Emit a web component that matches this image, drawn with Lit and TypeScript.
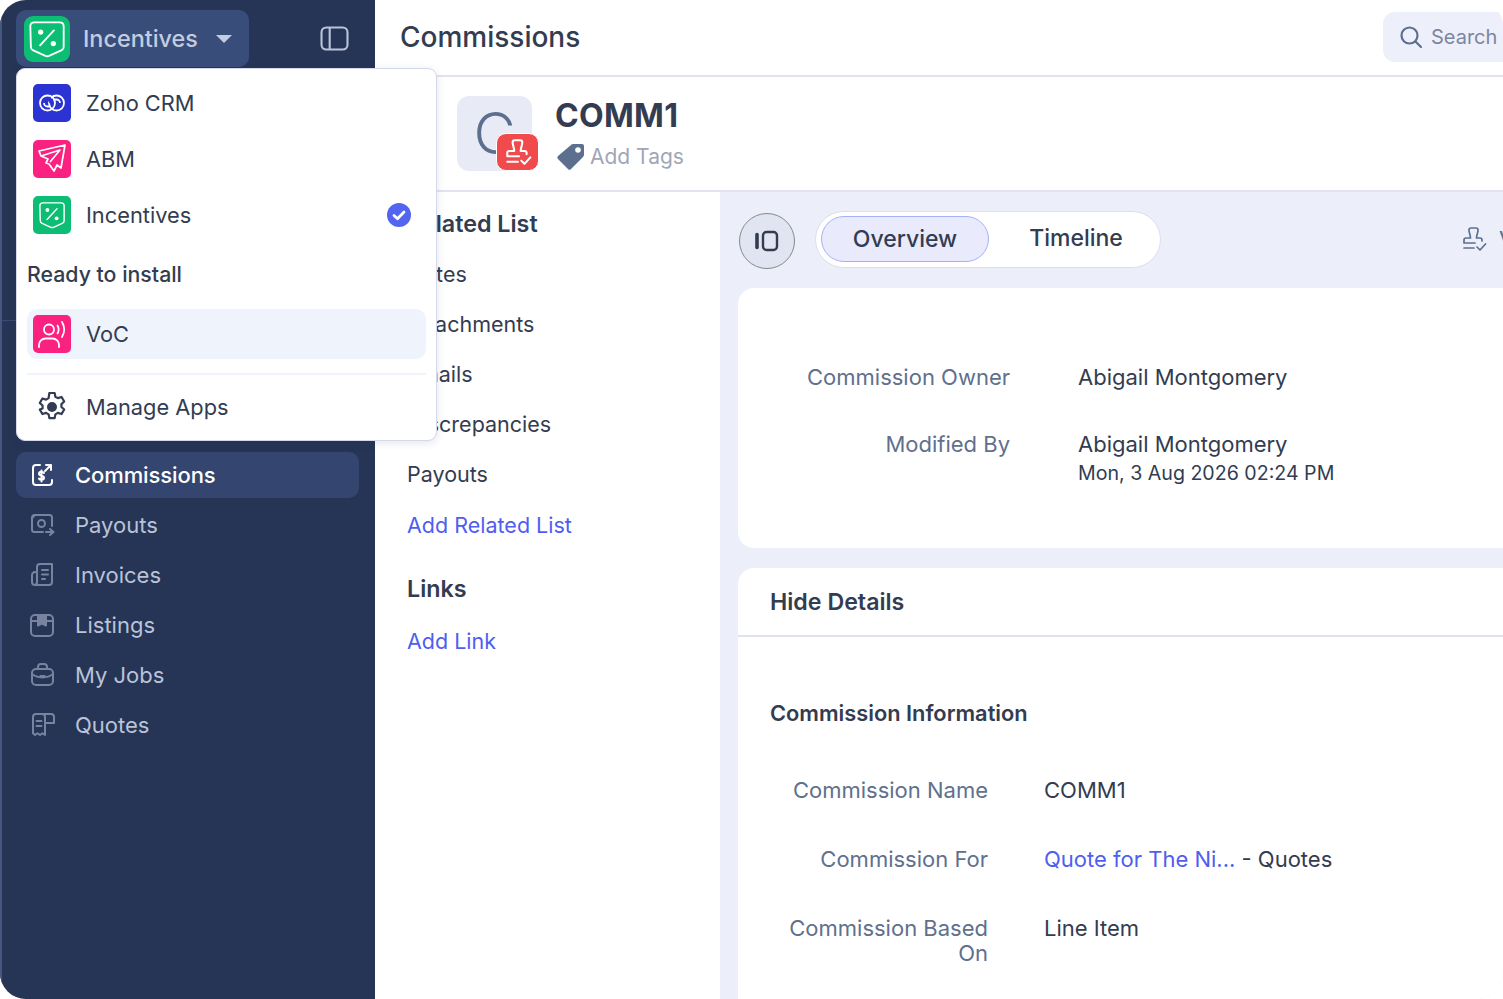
import { LitElement, html, css, svg } from 'lit';
import { customElement } from 'lit/decorators.js';

const shield = (w: number, s = 1) => svg`
  <g transform="translate(20 20) scale(${s}) translate(-20 -20)">
    <path d="M5.500 9c0-2.200 1.500-3.500 3.500-3.500h22c2 0 3.500 1.300 3.500 3.500v18c0 1.200-.6 2.200-1.700 2.700l-11 5c-1 .4-2.200.4-3.200 0l-11-5c-1.100-.5-1.600-1.500-1.600-2.700z" fill="none" stroke="#fff" stroke-width="${w}"/>
    <path d="M14 25.500 26 12.500" stroke="#fff" stroke-width="${w}" stroke-linecap="round"/>
    <circle cx="14.500" cy="14" r="2.300" fill="#fff"/><circle cx="25.500" cy="24" r="2.300" fill="#fff"/>
  </g>`;

const navIcons: Record<string, unknown> = {
  Commissions: svg`<path d="M11 3H7a3 3 0 0 0-3 3v14a3 3 0 0 0 3 3h13a3 3 0 0 0 3-3v-2"/><path d="M16 9l6-6M17 3h5v5"/><path d="M15 11c-.5-.8-1.300-1.200-2.500-1.200-1.500 0-2.500.8-2.500 2 0 2.600 5 1.400 5 4 0 1.200-1 2-2.500 2-1.200 0-2-.4-2.500-1.200M12.500 8.500v11"/>`,
  Payouts: svg`<path d="M3 5.500A2.500 2.500 0 0 1 5.500 3h15A2.500 2.500 0 0 1 23 5.500V14M14 20H5.500A2.500 2.500 0 0 1 3 17.500V5.500"/><circle cx="12.500" cy="11.500" r="3.500"/><path d="M3 6l3-3M17 20h7M21 17l3.500 3-3.500 3"/>`,
  Invoices: svg`<path d="M8 10V5a3 3 0 0 1 3-3h12v18a3 3 0 0 1-3 3H6a3 3 0 0 1-3-3v-7a3 3 0 0 1 5-2.200V20a3 3 0 0 1-2 3"/><path d="M13 8h6M13 12.500h6M13 17h3"/>`,
  Listings: svg`<rect x="2" y="3" width="22" height="21" rx="4"/><path d="M2 9h22"/><path d="M9 4h8v9.500l-4-1.800-4 1.800z" fill="currentColor"/>`,
  'My Jobs': svg`<rect x="3" y="7" width="21" height="16" rx="4"/><path d="M9 7V5a3 3 0 0 1 3-3h3a3 3 0 0 1 3 3v2M3 12c6 4.500 15 4.500 21 0M11.500 14h4"/>`,
  Quotes: svg`<path d="M16 9V5a3 3 0 0 0-3-3h9a3 3 0 0 1 3 3v6h-9M16 9v14l-2.500-1.800L11 23l-2.500-1.800L6 23l-2-1.800V5a3 3 0 0 1 3-3h6"/><path d="M7.500 9h5M7.500 14h5"/>`,
};

const stamp = svg`<path d="M21 15v-1a2 2 0 0 0-2-2h-3.500c0-3 1.500-5 1.500-8a2 2 0 0 0-2-2h-5a2 2 0 0 0-2 2c0 3 1.500 5 1.500 8H5a2 2 0 0 0-2 2v3h11M3 22h10M16 21l3 3 5.500-6"/>`;

@customElement('app-root')
export class AppRoot extends LitElement {
  static styles = css`
    :host {
      display: block;
      width: 1503px;
      height: 999px;
      font-family: Inter, 'Noto Sans', sans-serif;
      color: #333c50;
    }
    svg { display: block; flex: none; }
    .shell {
      position: relative;
      display: flex;
      width: 1503px;
      height: 999px;
      overflow: hidden;
      border-radius: 26px;
      background: #fff;
    }

    .side {
      flex: none;
      width: 375px;
      box-sizing: border-box;
      background: #263556;
      border-left: 2px solid #46577f;
      padding: 10px 16px 0 14px;
    }
    .side-top {
      display: flex;
      align-items: center;
      justify-content: space-between;
      height: 57px;
      padding-right: 10px;
    }
    .switcher {
      display: flex;
      align-items: center;
      width: 233px;
      height: 57px;
      box-sizing: border-box;
      padding-left: 8px;
      background: #394d7a;
      border-radius: 10px;
      color: #c3cce0;
      font-size: 23.400px;
      font-weight: 500;
    }
    .logo-big {
      width: 46px;
      height: 46px;
      background: #0cbd74;
      border-radius: 9px;
      margin-right: 13px;
    }
    .caret {
      width: 0;
      height: 0;
      margin-left: 18px;
      border-left: 8px solid transparent;
      border-right: 8px solid transparent;
      border-top: 8px solid #c3cce0;
    }
    .side-line { height: 1px; margin: 253px 0 0 -14px; background: #3a4a70; }
    .nav { display: flex; flex-direction: column; margin-top: 131px; }
    .nav-item {
      display: flex;
      align-items: center;
      height: 46px;
      margin-bottom: 4px;
      padding-left: 13px;
      gap: 20px;
      color: #b9c3d9;
      font-size: 22px;
      border-radius: 10px;
    }
    .nav-item svg { stroke: #77839f; color: #77839f; }
    .nav-item.on {
      background: #34466f;
      color: #fff;
      font-weight: 500;
      letter-spacing: -0.100px;
    }
    .nav-item.on svg { stroke: #fff; color: #fff; }

    .menu {
      position: absolute;
      left: 16px;
      top: 68px;
      width: 421px;
      height: 373px;
      box-sizing: border-box;
      z-index: 5;
      padding: 9px 10px 0 10px;
      background: #fff;
      border: 1px solid #d4d8ea;
      border-radius: 9px;
      box-shadow: 0 2px 8px rgba(30, 40, 80, 0.12);
    }
    .app {
      display: flex;
      align-items: center;
      height: 50px;
      margin-bottom: 6px;
      padding-left: 6px;
      font-size: 21.800px;
      border-radius: 10px;
    }
    .app .tile {
      width: 38px;
      height: 38px;
      border-radius: 5px;
      margin-right: 15px;
      flex: none;
    }
    .app.hover { background: #eff3fc; margin-bottom: 0; }
    .green { background: #0cbd74; }
    .blue { background: #2b33d3; }
    .pink { background: #fb2180; }
    .check { margin-left: auto; margin-right: 15px; }
    .menu-head {
      font-size: 21.300px;
      font-weight: 500;
      margin: 21px 0 20.500px 0;
      line-height: 27px;
    }
    .menu-sep { height: 2px; background: #eff3fc; margin: 14px 0 7px; }
    .manage { margin-bottom: 0; }

    .main { flex: 1; min-width: 0; display: flex; flex-direction: column; }
    .head {
      flex: none;
      display: flex;
      align-items: center;
      justify-content: space-between;
      height: 77px;
      box-sizing: border-box;
      padding: 0 0 2px 25px;
      border-bottom: 2px solid #e2e3f2;
    }
    .head h1 { margin: 0; font-size: 28px; font-weight: 500; }
    .search {
      display: flex;
      align-items: center;
      gap: 8px;
      width: 180px;
      height: 50px;
      margin-right: -60px;
      padding-left: 16px;
      box-sizing: border-box;
      background: #edf0fa;
      border-radius: 12px;
      color: #7b869f;
      font-size: 20px;
      white-space: nowrap;
    }

    .rec {
      flex: none;
      display: flex;
      align-items: center;
      height: 115px;
      box-sizing: border-box;
      padding-left: 82px;
      border-bottom: 2px solid #e2e3f2;
    }
    .avatar {
      position: relative;
      width: 75px;
      height: 75px;
      margin: -1px 23px 0 0;
      background: #e8ebf5;
      border-radius: 12px;
      color: #5d6f8f;
      font-size: 58px;
      font-weight: 300;
      line-height: 75px;
      text-align: center;
    }
    .badge {
      position: absolute;
      left: 39px;
      top: 37px;
      width: 43px;
      height: 38px;
      box-sizing: border-box;
      background: #f04a4d;
      border: 1px solid #fff;
      border-radius: 10px;
      display: flex;
      align-items: center;
      justify-content: center;
    }
    .rec-text { margin-top: 2px; }
    .rec h2 { margin: 0; font-size: 32px; font-weight: 700; line-height: 36px; letter-spacing: 0.300px; }
    .tags {
      display: flex;
      align-items: center;
      gap: 4px;
      margin-top: 7px;
      margin-left: 1px;
      font-size: 21px;
      color: #a0a6b5;
    }

    .body { flex: 1; min-height: 0; display: flex; }
    .related {
      flex: none;
      width: 345px;
      box-sizing: border-box;
      padding: 18px 0 0 32px;
      font-size: 21.500px;
    }
    .related h3 { margin: 0; font-size: 23.300px; font-weight: 600; line-height: 28px; }
    .related div { height: 50px; line-height: 50px; }
    .related .first { margin-top: 11px; }
    .related .link { color: #4f5ef0; height: 52px; line-height: 52px; }
    .related h3.links { margin-top: 24px; }
    .related .addlink { margin-top: 12px; }

    .panel {
      flex: 1;
      min-width: 0;
      box-sizing: border-box;
      background: #eceffa;
      padding: 18px 0 0 18px;
      overflow: hidden;
    }
    .tools { display: flex; align-items: center; height: 58px; margin-bottom: 20px; }
    .round {
      flex: none;
      width: 56px;
      height: 56px;
      box-sizing: border-box;
      border-radius: 50%;
      background: #e1e5f1;
      border: 1px solid #85888f;
      display: flex;
      align-items: center;
      justify-content: center;
      margin: 4px 20px 0 1px;
    }
    .tabs {
      display: flex;
      flex: none;
      align-items: center;
      width: 346px;
      height: 57px;
      box-sizing: border-box;
      padding: 0 5px;
      background: #fff;
      border: 1px solid #dcdeee;
      border-radius: 29px;
      font-size: 23px;
      font-weight: 500;
    }
    .tab { flex: none; width: 170px; text-align: center; line-height: 44px; height: 46px; box-sizing: border-box; }
    .tab.on {
      width: 168px;
      background: #e9ebfd;
      border: 1px solid #a5b1f7;
      border-radius: 23px;
      margin-right: 2px;
    }
    .stamp {
      flex: none;
      display: flex;
      align-items: center;
      gap: 12px;
      margin-left: 300px;
      font-size: 22px;
      color: #5d6f8f;
      white-space: nowrap;
    }

    .card {
      background: #fff;
      border-radius: 16px 0 0 16px;
      width: 800px;
      font-size: 22px;
    }
    .card.one { height: 260px; margin-bottom: 20px; padding-top: 72px; box-sizing: border-box; }
    .card.two { border-radius: 16px 0 0 0; height: 440px; }
    .row { display: grid; align-items: start; }
    .one .row { grid-template-columns: 272px 1fr; column-gap: 68px; margin-bottom: 33px; line-height: 34px; }
    .two .row { grid-template-columns: 250px 1fr; column-gap: 56px; margin-bottom: 44px; line-height: 25px; }
    .two .lab { padding-left: 50px; }
    .lab { color: #60708d; text-align: right; }
    .val small { display: block; font-size: 19.600px; line-height: 25px; }
    .val a { color: #4f5ef0; }
    .hide {
      height: 69px;
      box-sizing: border-box;
      padding-left: 32px;
      line-height: 68px;
      font-size: 23.200px;
      font-weight: 600;
      border-bottom: 2px solid #dfe1ef;
    }
    .info {
      padding: 62px 0 0 32px;
      height: 28px;
      line-height: 28px;
      margin-bottom: 51px;
      font-size: 21.800px;
      font-weight: 600;
    }
  `;

  navRow(name: string, active = false) {
    return html`<div class="nav-item ${active ? 'on' : ''}">
      <svg width="26" height="26" viewBox="0 0 26 26" fill="none" stroke-width="2" stroke-linecap="round" stroke-linejoin="round">${navIcons[name]}</svg>
      ${name}
    </div>`;
  }

  render() {
    return html`
      <div class="shell">
        <aside class="side">
          <div class="side-top">
            <div class="switcher">
              <svg class="logo-big" viewBox="0 0 40 40">${shield(1.600)}</svg>
              Incentives
              <span class="caret"></span>
            </div>
            <svg width="29" height="25" viewBox="0 0 30 26" fill="none" stroke="#b9c3d9" stroke-width="2.200">
              <rect x="1.500" y="1.500" width="27" height="23" rx="5"/><path d="M10 1.500v23"/>
            </svg>
          </div>
          <div class="side-line"></div>
          <nav class="nav">
            ${this.navRow('Commissions', true)}
            ${this.navRow('Payouts')}
            ${this.navRow('Invoices')}
            ${this.navRow('Listings')}
            ${this.navRow('My Jobs')}
            ${this.navRow('Quotes')}
          </nav>
        </aside>

        <div class="menu">
          <div class="app">
            <svg class="tile blue" viewBox="0 0 38 38" fill="none" stroke="#fff" stroke-width="1.800">
              <circle cx="14.500" cy="19" r="7.500"/>
              <circle cx="23.500" cy="19" r="7.500"/>
              <path d="M15.500 13.500l3 5" stroke="#2b33d3" stroke-width="4"/>
              <path d="M11 19a3.500 3.500 0 0 0 3.500 3.500h3M27 19a3.500 3.500 0 0 0-3.500-3.500h-3"/>
            </svg>
            Zoho CRM
          </div>
          <div class="app">
            <svg class="tile pink" viewBox="0 0 38 38" fill="none" stroke="#fff" stroke-width="1.700" stroke-linejoin="round">
              <path d="M6 11 32 5l-4 23-4-3-3 6-5-7-3-1 2-4-7-3z"/><path d="M8 16l19-6-10 12"/>
            </svg>
            ABM
          </div>
          <div class="app">
            <svg class="tile green" viewBox="0 0 40 40">${shield(1.700, 0.88)}</svg>
            Incentives
            <svg class="check" width="24" height="24" viewBox="0 0 24 24">
              <circle cx="12" cy="12" r="12" fill="#5264f0"/>
              <path d="M7 12.500l3.500 3.200L17 9" fill="none" stroke="#fff" stroke-width="2.800" stroke-linecap="round" stroke-linejoin="round"/>
            </svg>
          </div>
          <div class="menu-head">Ready to install</div>
          <div class="app hover">
            <svg class="tile pink" viewBox="0 0 38 38" fill="none" stroke="#fff" stroke-width="1.800" stroke-linecap="round">
              <circle cx="16" cy="14.500" r="5"/>
              <path d="M6 32v-2a6.500 6.500 0 0 1 6.500-6.500h7A6.500 6.500 0 0 1 26 30v2"/>
              <path d="M24.500 10.500c1.500 2.500 1.500 5.500 0 8M29 7c2.700 4.500 2.700 10.500 0 15"/>
            </svg>
            VoC
          </div>
          <div class="menu-sep"></div>
          <div class="app manage">
            <svg class="tile" viewBox="0 0 24 24" fill="none" stroke="#333c50" stroke-width="1.500" stroke-linejoin="round">
              <path d="M10.200 2.500h3.600l.5 2.500 1.700 1 2.500-.8 1.800 3.100-1.900 1.700v2l1.900 1.700-1.800 3.100-2.500-.8-1.700 1-.5 2.500h-3.600l-.5-2.500-1.700-1-2.500.8-1.800-3.100L5.600 13v-2L3.700 9.300l1.800-3.100 2.500.8 1.700-1z" transform="translate(12 12) scale(.93) translate(-12 -12)"/>
              <circle cx="12" cy="12" r="2.400" fill="#333c50"/>
            </svg>
            Manage Apps
          </div>
        </div>

        <main class="main">
          <header class="head">
            <h1>Commissions</h1>
            <div class="search">
              <svg width="24" height="24" viewBox="0 0 24 24" fill="none" stroke="#5d6f8f" stroke-width="2.200" stroke-linecap="round">
                <circle cx="10.500" cy="10.500" r="8"/><path d="M16.500 16.500l5.500 5.500"/>
              </svg>
              Search records
            </div>
          </header>

          <section class="rec">
            <div class="avatar">C
              <span class="badge">
                <svg width="28" height="28" viewBox="0 0 26 26" fill="none" stroke="#fff" stroke-width="1.900" stroke-linecap="round" stroke-linejoin="round">${stamp}</svg>
              </span>
            </div>
            <div class="rec-text">
              <h2>COMM1</h2>
              <div class="tags">
                <svg width="30" height="30" viewBox="0 0 30 30">
                  <path d="M17 3h9a2 2 0 0 1 2 2v9a3 3 0 0 1-1 2L15 28a2 2 0 0 1-3 0L2 18a2 2 0 0 1 0-3L15 4a3 3 0 0 1 2-1z" fill="#5d6f8f"/>
                  <circle cx="22" cy="9" r="2.800" fill="#fff"/>
                </svg>
                Add Tags
              </div>
            </div>
          </section>

          <div class="body">
            <section class="related">
              <h3>Related List</h3>
              <div class="first">Notes</div>
              <div>Attachments</div>
              <div>Emails</div>
              <div>Discrepancies</div>
              <div>Payouts</div>
              <div class="link">Add Related List</div>
              <h3 class="links">Links</h3>
              <div class="link addlink">Add Link</div>
            </section>

            <section class="panel">
              <div class="tools">
                <span class="round">
                  <svg width="26" height="26" viewBox="0 0 26 26" fill="none" stroke="#333c50" stroke-width="2.400" stroke-linejoin="round">
                    <path d="M3 6.500v13" stroke-width="3.600" stroke-linecap="round"/><rect x="9" y="4" width="14" height="18" rx="3.500"/>
                  </svg>
                </span>
                <div class="tabs">
                  <div class="tab on">Overview</div>
                  <div class="tab">Timeline</div>
                </div>
                <div class="stamp">
                  <svg width="26" height="26" viewBox="0 0 26 26" fill="none" stroke="#5d6f8f" stroke-width="1.700" stroke-linecap="round" stroke-linejoin="round">${stamp}</svg>
                  View
                </div>
              </div>

              <div class="card one">
                <div class="row"><span class="lab">Commission Owner</span><span class="val">Abigail Montgomery</span></div>
                <div class="row"><span class="lab">Modified By</span><span class="val">Abigail Montgomery<small>Mon, 3 Aug 2026 02:24 PM</small></span></div>
              </div>

              <div class="card two">
                <div class="hide">Hide Details</div>
                <div class="info">Commission Information</div>
                <div class="row"><span class="lab">Commission Name</span><span class="val">COMM1</span></div>
                <div class="row"><span class="lab">Commission For</span><span class="val"><a>Quote for The Ni...</a> - Quotes</span></div>
                <div class="row"><span class="lab">Commission Based On</span><span class="val">Line Item</span></div>
              </div>
            </section>
          </div>
        </main>
      </div>
    `;
  }
}
